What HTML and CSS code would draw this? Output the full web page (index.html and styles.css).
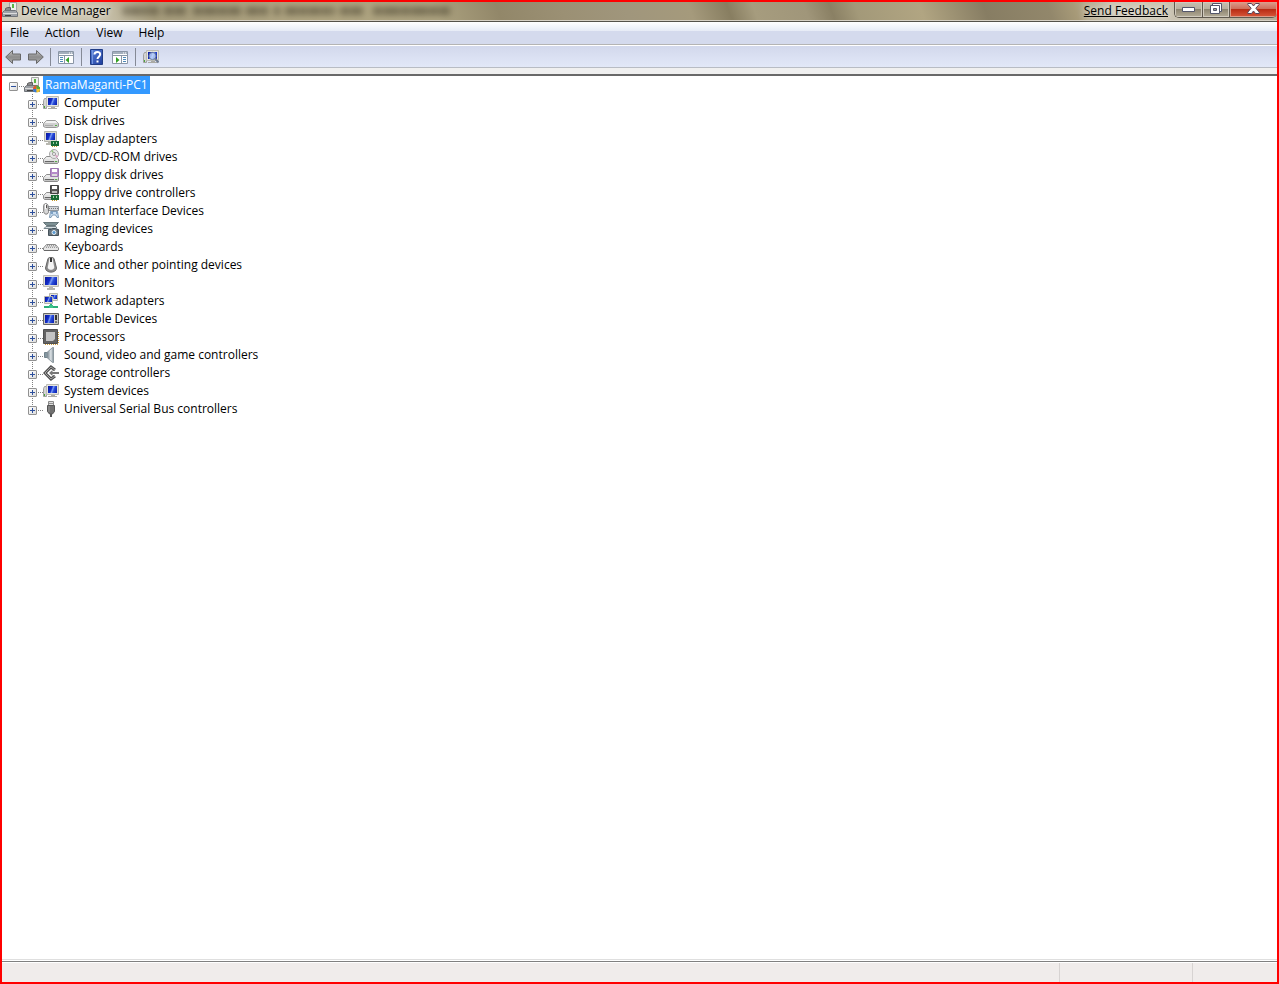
FILE: index.html
```html
<!DOCTYPE html>
<html lang="en">

<head>
    <meta charset="utf-8">
    <meta name="viewport" content="width=device-width, initial-scale=1.0">
    <title>Device Manager</title>
    <link rel="stylesheet" href="styles.css">
</head>

<body>

    <!-- shared icon parts -->
    <svg class="defs" width="0" height="0" aria-hidden="true">
        <defs>
            <linearGradient id="screen" x1="0" y1="0.2" x2="1" y2="0.5">
                <stop offset="0" stop-color="#0a18a0" />
                <stop offset="0.4" stop-color="#1430cc" />
                <stop offset="0.55" stop-color="#7f9ff4" />
                <stop offset="0.7" stop-color="#2b50dc" />
                <stop offset="1" stop-color="#1028b8" />
            </linearGradient>
            <linearGradient id="metal" x1="0" y1="0" x2="0" y2="1">
                <stop offset="0" stop-color="#f6f6f6" />
                <stop offset="1" stop-color="#9a9a9a" />
            </linearGradient>
            <linearGradient id="cone" x1="0" y1="0" x2="1" y2="0">
                <stop offset="0" stop-color="#6e7c86" />
                <stop offset="0.6" stop-color="#dfe5e8" />
                <stop offset="1" stop-color="#7c8a94" />
            </linearGradient>
            <linearGradient id="arrow" x1="0" y1="0" x2="0" y2="1">
                <stop offset="0" stop-color="#c4c4c4" />
                <stop offset="0.5" stop-color="#8c8c8c" />
                <stop offset="1" stop-color="#b0b0b0" />
            </linearGradient>
            <linearGradient id="book" x1="0" y1="0" x2="1" y2="1">
                <stop offset="0" stop-color="#5b84dc" />
                <stop offset="1" stop-color="#1d3c9c" />
            </linearGradient>
            <symbol id="monitor" viewBox="0 0 16 16">
                <path d="M.5.500h15v11H.5z" fill="#e0e0da" stroke="#bcbcb6" />
                <path d="M2 2h12v8H2z" fill="url(#screen)" />
                <path d="M6 12h4v1h2v2H4v-2h2z" fill="#b4b4ae" />
            </symbol>
            <symbol id="computer" viewBox="0 0 16 16">
                <path d="M.5 5.500l1-2h2v10h-3z" fill="#d4d4d4" stroke="#a0a0a0" />
                <path d="M1 11h1v2H1z" fill="#4ca63c" />
                <path d="M3.500 1.500h12v10h-12z" fill="#e6e6e0" stroke="#bcbcb6" />
                <path d="M5 3h9v7H5z" fill="url(#screen)" />
                <path d="M8 12h4v1h2v1H5v-1h3z" fill="#aaaaa4" />
            </symbol>
            <symbol id="drive" viewBox="0 0 16 16">
                <path d="M3.500 7.500h9l3 3v3l-1 1h-13l-1-1v-3z" fill="#c4c4c4" stroke="#8c8c8c" />
                <path d="M3.500 8h9l2 2h-13z" fill="#ececec" />
                <path d="M1 11h14" stroke="#fff" />
                <path d="M2 12h9v1H2z" fill="#666" />
                <path d="M12 12h2v1h-2z" fill="#55b044" />
            </symbol>
            <symbol id="chip" viewBox="0 0 16 16">
                <path d="M8 10h8v5H8z" fill="#176b35" />
                <path d="M10 11h1v2h-1zM13 11h1v2h-1z" fill="#9fd0a5" />
                <path d="M9 15.500h6" stroke="#c79a2c" stroke-dasharray="1 1" />
            </symbol>
            <symbol id="manager" viewBox="0 0 16 16">
                <path d="M7.500.5h7v9h-7z" fill="#eef0ec" stroke="#a4a4a4" />
                <path d="M10 2h2v4h-2z" fill="#5cb544" />
                <path d="M3.500 8.500v-2l2-1h3v3z" fill="#8a8a8a" stroke="#606060" />
                <path d="M.5 10.500l2-2h11l2 2v4H.5z" fill="#9da1a6" stroke="#6f7378" />
                <path d="M1 11.500h14" stroke="#dcdcdc" />
                <path d="M3 13h6v1H3z" fill="#444" />
            </symbol>
        </defs>
    </svg>

    <div class="window">
        <header class="titlebar">
            <svg class="icon" viewBox="0 0 16 16" aria-hidden="true"><use href="#manager" /></svg>
            <h1 class="title">Device Manager</h1>
            <svg class="smudge" viewBox="0 0 340 18" aria-hidden="true">
                <g fill="none" stroke="#3e3827" stroke-width="8">
                    <path d="M4 9h36" stroke-dasharray="6 1 11 1" />
                    <path d="M45 9h22M74 9h48" stroke-dasharray="9 1 14 1" />
                    <path d="M127 9h22M155 9h6M166 9h50" stroke-dasharray="13 1 8 1" />
                    <path d="M221 9h23M254 9h77" stroke-dasharray="9 1 17 1" />
                </g>
            </svg>
            <a class="feedback" href="#">Send Feedback</a>
            <div class="controls">
                <button class="control minimize" aria-label="Minimize">
                    <svg width="13" height="6" viewBox="0 0 13 6"><path d="M.5.5h12v4H.5z" fill="#fff" stroke="#53566a" /></svg>
                </button>
                <button class="control restore" aria-label="Restore">
                    <svg width="12" height="11" viewBox="0 0 12 11">
                        <path d="M2.500.5h9v8h-9z" fill="#fff" stroke="#53566a" />
                        <path d="M.5 2.500h9v8h-9z" fill="#fff" stroke="#53566a" />
                        <path d="M3.500 5.500h3v2h-3z" fill="#aaa292" stroke="#53566a" />
                    </svg>
                </button>
                <button class="control close" aria-label="Close">
                    <svg width="13" height="11" viewBox="0 0 13 11"><path d="M.8.5h3.700l2 2.500 2-2.500h3.700v1L8.800 5.200l3.400 4v1.300H8.500l-2-2.500-2 2.500H.8V9.200l3.400-4L.8 1.500z" fill="#fff" stroke="#56455a" /></svg>
                </button>
            </div>
        </header>

        <nav class="menubar">
            <button class="menu-item">File</button>
            <button class="menu-item">Action</button>
            <button class="menu-item">View</button>
            <button class="menu-item">Help</button>
        </nav>

        <div class="toolbar" role="toolbar" aria-label="Tools">
            <div class="tool-group">
                <button class="tool" aria-label="Back">
                    <svg class="icon" viewBox="0 0 16 16"><path d="M.7 8L7.500 1.500V5h8v6h-8v3.500z" fill="url(#arrow)" stroke="#686868" /></svg>
                </button>
                <button class="tool" aria-label="Forward">
                    <svg class="icon" viewBox="0 0 16 16"><path d="M15.300 8L8.500 1.500V5h-8v6h8v3.500z" fill="url(#arrow)" stroke="#686868" /></svg>
                </button>
            </div>
            <div class="tool-group">
                <button class="tool" aria-label="Show or hide console tree">
                    <svg class="icon" viewBox="0 0 16 16">
                        <path d="M.5 2.500h15v12H.5z" fill="#fff" stroke="#8a96a6" />
                        <path d="M1 3h14v2H1z" fill="#a4afbd" />
                        <path d="M11 4h1M13 4h1" stroke="#fff" />
                        <path d="M1 6.500h14M6.500 7v8" stroke="#8a96a6" />
                        <path d="M2 8.500h3M2 10.500h3M2 12.500h3" stroke="#4f8ab8" />
                        <path d="M11 8v6l-3.500-3z" fill="#32a024" />
                    </svg>
                </button>
            </div>
            <div class="tool-group">
                <button class="tool" aria-label="Help">
                    <svg class="icon" viewBox="0 0 16 16">
                        <path d="M1.500.5h12v15h-12z" fill="url(#book)" stroke="#203c85" />
                        <path d="M3.500 1v14" stroke="#7396df" />
                        <path d="M5.500 5.500C5.500 2.200 11.200 2.200 11.200 5.300 11.200 7.600 8.500 7.700 8.500 10" fill="none" stroke="#fff" stroke-width="2" />
                        <path d="M7.500 11.500h2v2h-2z" fill="#fff" />
                    </svg>
                </button>
                <button class="tool" aria-label="Show or hide action pane">
                    <svg class="icon" viewBox="0 0 16 16">
                        <path d="M.5 2.500h15v12H.5z" fill="#fff" stroke="#8a96a6" />
                        <path d="M1 3h14v2H1z" fill="#a4afbd" />
                        <path d="M11 4h1M13 4h1" stroke="#fff" />
                        <path d="M1 6.500h14M9.500 7v8" stroke="#8a96a6" />
                        <path d="M11 8.500h3M11 10.500h3M11 12.500h3" stroke="#4f8ab8" />
                        <path d="M4 8v6l3.500-3z" fill="#32a024" />
                    </svg>
                </button>
            </div>
            <div class="tool-group">
                <button class="tool" aria-label="Scan for hardware changes">
                    <svg class="icon" viewBox="0 0 16 16">
                        <use href="#computer" />
                        <circle cx="9.500" cy="7" r="3.600" fill="#cfe4fb" fill-opacity="0.75" stroke="#62769c" />
                        <path d="M12 9.500l3.500 4" stroke="#707c90" stroke-width="2" />
                    </svg>
                </button>
            </div>
        </div>

        <main class="content">
            <div class="node root">
                <button class="toggle minus" aria-label="Collapse RamaMaganti-PC1"></button>
                <span class="dots"></span>
                <svg class="icon" viewBox="0 0 16 16">
                    <use href="#manager" />
                    <path d="M9 12a3.500 3.500 0 0 1 3.500-3.500v3.500z" fill="#e2562b" />
                    <path d="M12.500 8.500a3.500 3.500 0 0 1 3.500 3.500h-3.500z" fill="#56ad35" />
                    <path d="M9 12a3.500 3.500 0 0 0 3.500 3.500v-3.500z" fill="#3878d0" />
                    <path d="M12.500 15.500a3.500 3.500 0 0 0 3.500-3.500h-3.500z" fill="#f2c52c" />
                </svg>
                <span class="label selected">RamaMaganti-PC1</span>
            </div>
            <ul class="tree">
                <li class="node">
                    <button class="toggle" aria-label="Expand Computer"></button>
                    <span class="dots"></span>
                    <svg class="icon" viewBox="0 0 16 16"><use href="#computer" /></svg>
                    <span class="label">Computer</span>
                </li>
                <li class="node">
                    <button class="toggle" aria-label="Expand Disk drives"></button>
                    <span class="dots"></span>
                    <svg class="icon" viewBox="0 0 16 16">
                        <path d="M3.500 7.500h9l3 3v3l-2 1h-11l-2-1v-3z" fill="#cfcfcf" stroke="#989898" />
                        <path d="M3.500 8h9l2 2h-13z" fill="#f2f2f2" />
                        <path d="M2 12.500h8" stroke="#aaa" />
                        <path d="M12 12h2v1h-2z" fill="#55b044" />
                    </svg>
                    <span class="label">Disk drives</span>
                </li>
                <li class="node">
                    <button class="toggle" aria-label="Expand Display adapters"></button>
                    <span class="dots"></span>
                    <svg class="icon" viewBox="0 0 16 16">
                        <path d="M1.500.5h12v10h-12z" fill="#dcdcd4" stroke="#b4b4ac" />
                        <path d="M3 2h9v7H3z" fill="url(#screen)" />
                        <path d="M5 11h3v3H3v-2h2z" fill="#b8b8b0" />
                        <use href="#chip" />
                    </svg>
                    <span class="label">Display adapters</span>
                </li>
                <li class="node">
                    <button class="toggle" aria-label="Expand DVD/CD-ROM drives"></button>
                    <span class="dots"></span>
                    <svg class="icon" viewBox="0 0 16 16">
                        <use href="#drive" />
                        <circle cx="11" cy="5" r="4.500" fill="#e8e8e8" stroke="#a8a8a8" />
                        <path d="M11 5L8 2l2-1z" fill="#8fc47c" />
                        <path d="M11 5l4 2-1 2z" fill="#dba0c4" />
                        <circle cx="11" cy="5" r="1.500" fill="#fff" stroke="#999" />
                    </svg>
                    <span class="label">DVD/CD-ROM drives</span>
                </li>
                <li class="node">
                    <button class="toggle" aria-label="Expand Floppy disk drives"></button>
                    <span class="dots"></span>
                    <svg class="icon" viewBox="0 0 16 16">
                        <use href="#drive" />
                        <path d="M7.500 1.500h8v8h-8z" fill="#b58bc9" stroke="#9c78b0" />
                        <path d="M9 2h5v3H9z" fill="#fff" />
                        <path d="M9 7h5v2H9z" fill="#ddd" />
                    </svg>
                    <span class="label">Floppy disk drives</span>
                </li>
                <li class="node">
                    <button class="toggle" aria-label="Expand Floppy drive controllers"></button>
                    <span class="dots"></span>
                    <svg class="icon" viewBox="0 0 16 16">
                        <use href="#drive" />
                        <path d="M7.500.5h8v8h-8z" fill="#555" stroke="#444" />
                        <path d="M9 1h5v3H9z" fill="#fff" />
                        <path d="M9 6h5v2H9z" fill="#bbb" />
                        <use href="#chip" />
                    </svg>
                    <span class="label">Floppy drive controllers</span>
                </li>
                <li class="node">
                    <button class="toggle" aria-label="Expand Human Interface Devices"></button>
                    <span class="dots"></span>
                    <svg class="icon" viewBox="0 0 16 16">
                        <path d="M5 3.500h10.500v4H5z" fill="#d5d8db" stroke="#92989e" />
                        <path d="M6 5.500h9" stroke="#777" stroke-dasharray="1 1" />
                        <path d="M.7 2.500C1 0 4.500 0 5 2.500l.5 6C5.500 12 1 12 .7 8.500z" fill="#d8d8d8" stroke="#777" />
                        <path d="M2.500 1v5" stroke="#fff" />
                        <path d="M3.500 2v3" stroke="#555" />
                        <path d="M6.500 14.500l1-6h7l1 6H14l-1.500-2.500h-3L8 14.500z" fill="#c8dcef" stroke="#7d9ab5" />
                        <path d="M8 10h2M13 10h1" stroke="#34699e" />
                    </svg>
                    <span class="label">Human Interface Devices</span>
                </li>
                <li class="node">
                    <button class="toggle" aria-label="Expand Imaging devices"></button>
                    <span class="dots"></span>
                    <svg class="icon" viewBox="0 0 16 16">
                        <path d="M.5 1.500h15l-3 3h-9z" fill="#7d9094" stroke="#66767a" />
                        <path d="M3 5.500h10l1 2H1z" fill="#d4dde0" stroke="#76858c" />
                        <path d="M5.500 8.500h3l1-1h3l1 1h2v6h-10z" fill="#68757e" stroke="#46525a" />
                        <circle cx="11" cy="11.500" r="2" fill="#5a9bd4" stroke="#e6eef2" />
                    </svg>
                    <span class="label">Imaging devices</span>
                </li>
                <li class="node">
                    <button class="toggle" aria-label="Expand Keyboards"></button>
                    <span class="dots"></span>
                    <svg class="icon" viewBox="0 0 16 16">
                        <path d="M3.500 5.500h9l3 3.500v2l-1 .5h-13l-1-.5V9z" fill="#e6e6e6" stroke="#8a8a8a" />
                        <path d="M4 6.500h9M3 8.500h11" stroke="#999" stroke-dasharray="1 1" />
                        <path d="M3.500 7.500h9" stroke="#aaa" stroke-dasharray="1 1" />
                        <path d="M1 11.500h14" stroke="#666" />
                    </svg>
                    <span class="label">Keyboards</span>
                </li>
                <li class="node">
                    <button class="toggle" aria-label="Expand Mice and other pointing devices"></button>
                    <span class="dots"></span>
                    <svg class="icon" viewBox="0 0 16 16">
                        <path d="M5 1.500C6 0 10 0 11 1.500l2.500 9.500C13.500 16.500 2.500 16.500 2.500 11z" fill="#8c8c8c" stroke="#666" />
                        <path d="M6.500 1h3l1.500 8C13 14 3 14 5 9z" fill="#f4f4f4" />
                        <path d="M8 1v4" stroke="#333" stroke-width="2" />
                    </svg>
                    <span class="label">Mice and other pointing devices</span>
                </li>
                <li class="node">
                    <button class="toggle" aria-label="Expand Monitors"></button>
                    <span class="dots"></span>
                    <svg class="icon" viewBox="0 0 16 16"><use href="#monitor" /></svg>
                    <span class="label">Monitors</span>
                </li>
                <li class="node">
                    <button class="toggle" aria-label="Expand Network adapters"></button>
                    <span class="dots"></span>
                    <svg class="icon" viewBox="0 0 16 16">
                        <path d="M6.500.5h8v7h-8z" fill="#e4e4dc" stroke="#b4b4ac" />
                        <path d="M8 2h6v4H8z" fill="url(#screen)" />
                        <path d="M1.500 3.500h8v7h-8z" fill="#e4e4dc" stroke="#b4b4ac" />
                        <path d="M2 4h7v5H2z" fill="url(#screen)" />
                        <path d="M8 11v3M1 14h14" stroke="#2cae78" stroke-width="2" />
                        <path d="M6 12h4v3H6z" fill="#3cc48c" />
                    </svg>
                    <span class="label">Network adapters</span>
                </li>
                <li class="node">
                    <button class="toggle" aria-label="Expand Portable Devices"></button>
                    <span class="dots"></span>
                    <svg class="icon" viewBox="0 0 16 16">
                        <path d="M.5 2.500h15v11H.5z" fill="#c8c8c4" stroke="#666" />
                        <path d="M2 4h9v8H2z" fill="url(#screen)" />
                        <path d="M12 4h2v5h-2z" fill="#333" />
                        <path d="M12 10h2v2h-2z" fill="#777" />
                    </svg>
                    <span class="label">Portable Devices</span>
                </li>
                <li class="node">
                    <button class="toggle" aria-label="Expand Processors"></button>
                    <span class="dots"></span>
                    <svg class="icon" viewBox="0 0 16 16">
                        <path d="M2 15.500h14M15.500 3v12" stroke="#c99a3a" stroke-dasharray="1 1" />
                        <path d="M.5.5h14v14H.5z" fill="#636363" stroke="#505050" />
                        <path d="M3 3h9v7l-2 2H3z" fill="#c4c4c4" />
                    </svg>
                    <span class="label">Processors</span>
                </li>
                <li class="node">
                    <button class="toggle" aria-label="Expand Sound, video and game controllers"></button>
                    <span class="dots"></span>
                    <svg class="icon" viewBox="0 0 16 16">
                        <path d="M1.500 5.500h3v5h-3z" fill="#8095a0" stroke="#72828a" />
                        <path d="M4 5.500l5.500-5h1v15h-1L4 10.500z" fill="url(#cone)" stroke="#8c989f" />
                    </svg>
                    <span class="label">Sound, video and game controllers</span>
                </li>
                <li class="node">
                    <button class="toggle" aria-label="Expand Storage controllers"></button>
                    <span class="dots"></span>
                    <svg class="icon" viewBox="0 0 16 16">
                        <path d="M12 5L8 2 2 8l6 6 4-3" fill="none" stroke="#505050" stroke-width="3" />
                        <path d="M12 5L8 2 2 8l6 6 4-3" fill="none" stroke="#a4a4a4" />
                        <path d="M6 8l3.500-3v2H16v2H9.500v2z" fill="#777" />
                    </svg>
                    <span class="label">Storage controllers</span>
                </li>
                <li class="node">
                    <button class="toggle" aria-label="Expand System devices"></button>
                    <span class="dots"></span>
                    <svg class="icon" viewBox="0 0 16 16"><use href="#computer" /></svg>
                    <span class="label">System devices</span>
                </li>
                <li class="node">
                    <button class="toggle" aria-label="Expand Universal Serial Bus controllers"></button>
                    <span class="dots"></span>
                    <svg class="icon" viewBox="0 0 16 16">
                        <path d="M5.500.5h5v4h-5z" fill="#ddd" stroke="#888" />
                        <path d="M7 2v1M9 2v1" stroke="#444" />
                        <path d="M4.500 4.500h7v6l-2 2.500h-3l-2-2.500z" fill="#707070" stroke="#555" />
                        <path d="M6 5v6" stroke="#999" />
                        <path d="M8 13v3" stroke="#555" stroke-width="2" />
                    </svg>
                    <span class="label">Universal Serial Bus controllers</span>
                </li>
            </ul>
        </main>

        <footer class="statusbar">
            <div class="status-main"></div>
            <div class="status-cell wide"></div>
            <div class="status-cell"></div>
        </footer>
    </div>

</body>

</html>
```
FILE: styles.css
```css
* {
    box-sizing: border-box;
}

body {
    margin: 0;
    font-family: "Open Sans", "Noto Sans", sans-serif;
    font-size: 12px;
    line-height: 18px;
    color: #000;
}

button {
    margin: 0;
    padding: 0;
    border: none;
    background: none;
    font: inherit;
    color: inherit;
}

.defs {
    position: absolute;
}

.icon {
    flex: none;
    width: 16px;
    height: 16px;
}

.window {
    display: flex;
    flex-direction: column;
    min-height: 100vh;
    border: 2px solid #f00;
    background-color: #fff;
}

/* title bar */

.titlebar {
    display: flex;
    height: 20px;
    border-bottom: 1px solid #55524a;
    box-shadow: inset 0 -1px #d6d0c4;
    background: linear-gradient(70deg, #d2cdbd 0, #c8c1ab 8%, #a79d7d 12%, #b0a581 25%, #aca27f 34%, #928769 39%, #9b9074 44%, #a0967c 49%, #a59a7c 54%, #887e61 57%, #a69c7e 59%, #a0967a 63%, #8a8064 65%, #a39979 67%, #b1a582 72%, #877d63 77%, #92876b 82%, #a79a78 84%, #cbc4b2 87%, #cbc4b2 91%, #b4ab97 100%);
}

.title {
    margin: 0 0 0 3px;
    font-size: 12px;
    font-weight: normal;
    text-shadow: 0 0 6px #fff;
}

.smudge {
    width: 340px;
    height: 18px;
    margin-left: 8px;
    opacity: 0.5;
    filter: blur(3px);
}

.feedback {
    margin-left: auto;
    color: #000;
    text-shadow: 0 0 6px #fff;
}

.controls {
    display: flex;
    height: 16px;
    margin-left: 6px;
    border: 1px solid #5f594e;
    border-top: none;
    border-right: none;
    border-radius: 0 0 5px 5px;
    overflow: hidden;
}

.control {
    display: flex;
    align-items: center;
    justify-content: center;
    width: 27px;
    padding-bottom: 2px;
    background: linear-gradient(#c6c0b2, #b8b09e 45%, #8d8571 50%, #b5ad98);
    box-shadow: inset 0 0 0 1px #d0cabd;
}

.control.minimize {
    padding-bottom: 0;
}

.control + .control {
    border-left: 1px solid #5f594e;
}

.control.close {
    width: 48px;
    background: linear-gradient(#dc9c8c, #cd6f5b 45%, #b92c14 50%, #d8583a);
    box-shadow: inset 0 0 0 1px #dd9b88;
}

/* menu and toolbar */

.menubar {
    display: flex;
    height: 23px;
    border-bottom: 1px solid #b4b4b4;
    background: linear-gradient(#fff, #e6ebf6 9px, #d4daed 9px);
}

.menu-item {
    padding: 0 8px;
}

.toolbar {
    display: flex;
    align-items: center;
    height: 23px;
    border-top: 1px solid #fff;
    border-bottom: 1px solid #b8bcc4;
    background: linear-gradient(#d2d8ec, #e2e8f8);
}

.tool-group {
    display: flex;
    gap: 7px;
    padding: 1px 7px;
    border-left: 1px solid #858a96;
}

.tool-group:first-child {
    padding: 1px 6px 1px 3px;
    border-left: none;
}

.tool {
    display: flex;
}

/* device tree */

.content {
    flex: 1;
    border-top: 2px solid #696969;
    border-bottom: 1px solid #dfdfdf;
    background-color: #fff;
    box-shadow: 0 -6px #f0f0f0;
    margin-top: 6px;
}

.tree {
    margin: 0;
    padding: 0 0 0 26px;
    list-style: none;
}

.node {
    display: flex;
    height: 18px;
}

.root {
    padding-left: 7px;
}

.tree .node {
    background: repeating-linear-gradient(#808080 0, #808080 1px, transparent 1px, transparent 2px) 4px 0 / 1px 18px no-repeat;
}

.tree .node:last-child {
    background-size: 1px 10px;
}

.toggle {
    flex: none;
    width: 9px;
    height: 9px;
    margin-top: 6px;
    border: 1px solid #919191;
    border-radius: 1px;
    background:
        linear-gradient(#2c4f9c, #2c4f9c) center / 5px 1px no-repeat,
        linear-gradient(#2c4f9c, #2c4f9c) center / 1px 5px no-repeat,
        linear-gradient(135deg, #fff, #dcdcdc);
}

.toggle.minus {
    background:
        linear-gradient(#2c4f9c, #2c4f9c) center / 5px 1px no-repeat,
        linear-gradient(135deg, #fff, #dcdcdc);
}

.dots {
    width: 6px;
    height: 1px;
    margin-top: 10px;
    background: repeating-linear-gradient(90deg, transparent 0, transparent 1px, #808080 1px, #808080 2px);
}

.node .icon {
    margin-top: 1px;
}

.label {
    margin-left: 3px;
    padding: 0 2px;
    white-space: nowrap;
}

.label.selected {
    background-color: #39f;
    color: #fff;
}

/* status bar */

.statusbar {
    display: flex;
    height: 21px;
    margin-top: 1px;
    border-top: 1px solid #808080;
    box-shadow: inset 0 1px #fff;
    background-color: #f0eceb;
}

.status-main {
    flex: 1;
}

.status-cell {
    width: 85px;
    margin-top: 1px;
    border-left: 1px solid #d7d3d2;
}

.status-cell.wide {
    width: 133px;
}
```
